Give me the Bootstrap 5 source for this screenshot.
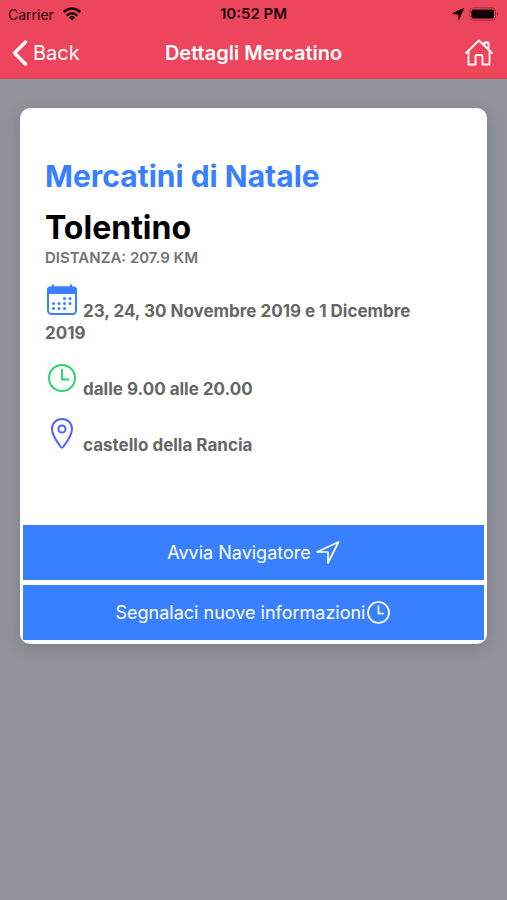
<!DOCTYPE html>
<html lang="it">
<head>
<meta charset="utf-8">
<meta name="viewport" content="width=device-width, initial-scale=1">
<title>Dettagli Mercatino</title>
<link href="https://cdn.jsdelivr.net/npm/bootstrap@5.3.0/dist/css/bootstrap.min.css" rel="stylesheet">
<style>
  body { font-family: Inter, "Liberation Sans", sans-serif; background: #92929b; }
  svg { display: block; flex: none; }
  .app-header { background: #ed455c; border-bottom: 1px solid #d0485d; }
  .status-bar { height: 28px; font-size: 14px; color: #1d060a; }
  .status-time { font-size: 15px; }
  .toolbar { height: 50px; color: #fff; }
  .toolbar a { color: #fff; font-size: 20px; }
  .toolbar h1 { font-size: 20px; font-weight: 600; }
  .side { flex: 1 1 0; }
  .market-card { margin: 29px 20px; padding: 0 3px 4px; border-radius: 10px; box-shadow: 0 4px 16px rgba(0, 0, 0, .14); }
  .market-body { padding: 48px 36px 69px 22px; }
  .market-kind { font-size: 30px; line-height: 40px; font-weight: 700; color: #3880ff; }
  .market-town { font-size: 32px; line-height: 40px; font-weight: 700; color: #000; margin-top: 12px; }
  .market-distance { font-size: 15px; line-height: 20px; font-weight: 600; color: #737373; margin-bottom: 15px; }
  .market-info { font-size: 17px; line-height: 22px; font-weight: 700; color: #666; margin-bottom: 17px; }
  .market-info svg { display: inline-block; vertical-align: 0; margin-right: 4px; }
  .market-actions { gap: 5px; }
  .market-action { height: 55px; font-size: 18px; background: #3880ff; color: #fff; }
  .market-action:hover { background: #3171e0; color: #fff; }
</style>
</head>
<body>
<header class="app-header">
  <div class="status-bar d-flex align-items-center px-2">
    <div class="side d-flex align-items-center gap-2">
      <span>Carrier</span>
      <svg width="20" height="14" viewBox="0 0 20 14" fill="none" stroke="#1d060a" stroke-width="2.5"><path d="M1.500 5.300Q10-2.300 18.500 5.300M4.700 8.600Q10 3.900 15.300 8.600"/><path d="M10 13.500L6.800 10.400Q10 7.800 13.200 10.400Z" fill="#1d060a" stroke="none"/></svg>
    </div>
    <span class="status-time fw-semibold">10:52 PM</span>
    <div class="side d-flex align-items-center justify-content-end gap-1">
      <svg width="12" height="12" viewBox="0 0 12 12"><path d="M11.800.3L6.800 11.600 6.300 6.200.3 5.600Z" fill="#1d060a" stroke="#1d060a" stroke-width=".8"/></svg>
      <svg width="31" height="14" viewBox="0 0 31 14"><rect x="2" y=".8" width="25.500" height="12.400" rx="3.500" fill="none" stroke="#9c3040"/><rect x="3.500" y="2.500" width="22.500" height="9" rx="2" fill="#100205"/><path d="M29 5Q31 7 29 9Z" fill="#9c3040"/></svg>
    </div>
  </div>
  <nav class="toolbar d-flex align-items-center px-2" aria-label="Navigazione">
    <div class="side d-flex">
      <a href="#" class="d-flex align-items-center gap-1 text-decoration-none ps-1"><svg width="17" height="26" viewBox="0 0 17 26" fill="none" stroke="#fff" stroke-width="3.500" stroke-linecap="round" stroke-linejoin="round"><path d="M13.500 2L2.500 13 13.500 24"/></svg><span>Back</span></a>
    </div>
    <h1 class="m-0">Dettagli Mercatino</h1>
    <div class="side d-flex justify-content-end">
      <a href="#" class="pe-1" aria-label="Home"><svg width="32" height="28" viewBox="0 0 32 28" fill="none" stroke="#fff" stroke-width="1.800" stroke-linecap="round" stroke-linejoin="round"><path d="M3 14L16 1.500 29 14M5.500 12V25.500H12.500V17.500Q12.500 16 14 16H18Q19.500 16 19.500 17.500V25.500H26.500V12M21.500 6.500V3.500H25.500V10"/></svg></a>
    </div>
  </nav>
</header>
<main>
  <article class="card market-card border-0">
    <div class="market-body">
      <h2 class="market-kind m-0">Mercatini di Natale</h2>
      <h3 class="market-town mb-0">Tolentino</h3>
      <p class="market-distance text-uppercase">Distanza: 207.9 km</p>
      <p class="market-info"><svg width="34" height="34" viewBox="0 0 34 34"><rect x="3" y="4.500" width="28" height="26.500" rx="3.500" fill="none" stroke="#3880ff" stroke-width="2"/><path d="M2 11V7Q2 3.500 5.500 3.500H7V1.500H9V3.500H25V1.500H27V3.500H28.500Q32 3.500 32 7V11Z" fill="#3880ff"/><path d="M19.500 15.500h.01M25 15.500h.01M8.500 20.500h.01M14 20.500h.01M19.500 20.500h.01M25 20.500h.01M8.500 25.500h.01M14 25.500h.01M19.500 25.500h.01" stroke="#3880ff" stroke-width="3" stroke-linecap="round"/></svg>23, 24, 30 Novembre 2019 e 1 Dicembre 2019</p>
      <p class="market-info"><svg width="34" height="34" viewBox="0 0 34 34" fill="none" stroke="#2dd36f" stroke-width="2"><circle cx="17" cy="17" r="13"/><path d="M17 8V18.500H24"/></svg>dalle 9.00 alle 20.00</p>
      <p class="market-info mb-0"><svg width="34" height="34" viewBox="0 0 34 34" fill="none" stroke="#5260ff" stroke-width="2"><path d="M17 2C11 2 7 6.300 7 12C7 18 12 25 15.800 30Q17 31.500 18.200 30C22 25 27 18 27 12C27 6.300 23 2 17 2Z"/><circle cx="17" cy="12" r="3.600"/></svg>castello della Rancia</p>
    </div>
    <div class="market-actions d-grid">
      <button type="button" class="btn market-action rounded-0 border-0 p-0 d-flex align-items-center justify-content-center gap-1">Avvia Navigatore <svg width="25" height="26" viewBox="0 0 25 26" fill="none" stroke="#fff" stroke-width="1.700" stroke-linejoin="round"><path d="M23.500 2L2 12H13V23Z"/></svg></button>
      <button type="button" class="btn market-action rounded-0 border-0 p-0 d-flex align-items-center justify-content-center">Segnalaci nuove informazioni<svg width="26" height="26" viewBox="0 0 26 26" fill="none" stroke="#fff" stroke-width="1.700"><circle cx="13.500" cy="12.500" r="10.500"/><path d="M13.500 5.500V13.500H19"/></svg></button>
    </div>
  </article>
</main>
<script src="https://cdn.jsdelivr.net/npm/bootstrap@5.3.0/dist/js/bootstrap.bundle.min.js"></script>
</body>
</html>
